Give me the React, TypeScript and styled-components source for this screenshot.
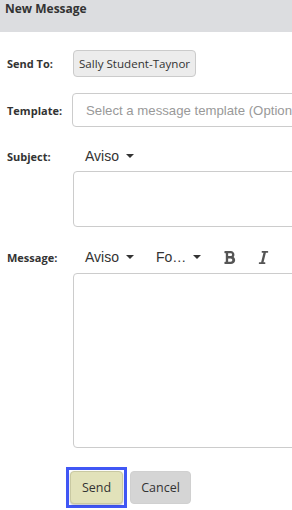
import React from 'react';
import styled, { createGlobalStyle } from 'styled-components';
import { FaBold, FaItalic } from 'react-icons/fa';

const GlobalStyle = createGlobalStyle`
  html, body {
    margin: 0;
    padding: 0;
    background: #fff;
    overflow: hidden;
  }
  body {
    font-family: 'Open Sans', 'Liberation Sans', sans-serif;
    color: #333;
  }
`;

const Page = styled.div`
  width: 360px;
  display: flex;
  flex-direction: column;
`;

const Header = styled.div`
  height: 32px;
  background: #dcdde0;
  padding: 1px 0 0 5px;
  box-sizing: border-box;
  font-size: 12px;
  font-weight: 700;
  color: #333;
  line-height: 16px;
`;

const Form = styled.div`
  display: flex;
  flex-direction: column;
  padding: 18px 0 0 7px;
`;

const Row = styled.div<{ $gap?: number }>`
  display: grid;
  grid-template-columns: 65px 1fr;
  align-items: center;
  margin-bottom: ${(p) => p.$gap ?? 0}px;
`;

const Label = styled.label`
  font-size: 11px;
  font-weight: 700;
  color: #333;
`;

const Chip = styled.div`
  justify-self: start;
  height: 27px;
  box-sizing: border-box;
  padding: 0 5px;
  display: flex;
  align-items: center;
  margin-left: 1px;
  background: #ececec;
  border: 1px solid #cbcbcb;
  border-radius: 4px;
  font-size: 11.6px;
  color: #333;
`;

const Select = styled.div`
  height: 34px;
  box-sizing: border-box;
  border: 1px solid #ccc;
  border-radius: 4px;
  padding: 0 13px;
  display: flex;
  align-items: center;
  font-family: 'Liberation Sans', Arial, sans-serif;
  font-size: 13.2px;
  color: #999;
  white-space: nowrap;
  overflow: hidden;
`;

const Toolbar = styled.div`
  display: flex;
  align-items: center;
  height: 20px;
  padding-left: 13px;
`;

const Dropdown = styled.div<{ $w: number }>`
  width: ${(p) => p.$w}px;
  display: flex;
  align-items: center;
  font-family: 'Liberation Sans', Arial, sans-serif;
  font-size: 14px;
  color: #333;
`;

const Caret = styled.span`
  display: inline-block;
  margin-left: 7px;
  width: 0;
  height: 0;
  border-left: 4px solid transparent;
  border-right: 4px solid transparent;
  border-top: 4px solid #333;
`;

const IconButton = styled.span<{ $w: number }>`
  width: ${(p) => p.$w}px;
  display: flex;
  align-items: center;
  color: #555;
  font-size: 15px;
`;

const Box = styled.div<{ $h: number }>`
  grid-column: 2;
  margin-left: 1px;
  height: ${(p) => p.$h}px;
  box-sizing: border-box;
  border: 1px solid #ccc;
  border-radius: 4px;
  background: #fff;
`;

const Actions = styled.div`
  display: flex;
  align-items: center;
  gap: 3px;
  padding-left: 59px;
`;

const Focus = styled.div`
  border: 3px solid #4057f5;
  padding: 1px;
  display: flex;
`;

const Button = styled.button<{ $primary?: boolean }>`
  height: 33px;
  padding: 0 ${(p) => (p.$primary ? 11 : 10)}px;
  border: 1px solid ${(p) => (p.$primary ? '#c9c9a2' : '#d0d0d0')};
  border-radius: 4px;
  background: ${(p) => (p.$primary ? '#e2e2ba' : '#d5d5d5')};
  box-shadow: ${(p) => (p.$primary ? '0 1px 2px rgba(0,0,0,0.25)' : 'none')};
  font-family: 'Open Sans', 'Liberation Sans', sans-serif;
  font-size: 12.5px;
  color: #333;
  cursor: pointer;
`;

export default function App() {
  return (
    <>
      <GlobalStyle />
      <Page>
        <Header>New Message</Header>
        <Form>
          <Row $gap={16}>
            <Label>Send To:</Label>
            <Chip>Sally Student-Taynor</Chip>
          </Row>
          <Row $gap={19}>
            <Label>Template:</Label>
            <Select>Select a message template (Optional)</Select>
          </Row>
          <Row $gap={5}>
            <Label>Subject:</Label>
            <Toolbar>
              <Dropdown $w={60}>
                Aviso
                <Caret />
              </Dropdown>
            </Toolbar>
          </Row>
          <Row $gap={20}>
            <Box $h={56} />
          </Row>
          <Row $gap={6}>
            <Label>Message:</Label>
            <Toolbar>
              <Dropdown $w={71}>
                Aviso
                <Caret />
              </Dropdown>
              <Dropdown $w={66}>
                Fo…
                <Caret />
              </Dropdown>
              <IconButton $w={34}>
                <FaBold />
              </IconButton>
              <IconButton $w={20}>
                <FaItalic />
              </IconButton>
            </Toolbar>
          </Row>
          <Row $gap={19}>
            <Box $h={175} />
          </Row>
          <Actions>
            <Focus>
              <Button $primary>Send</Button>
            </Focus>
            <Button>Cancel</Button>
          </Actions>
        </Form>
      </Page>
    </>
  );
}
